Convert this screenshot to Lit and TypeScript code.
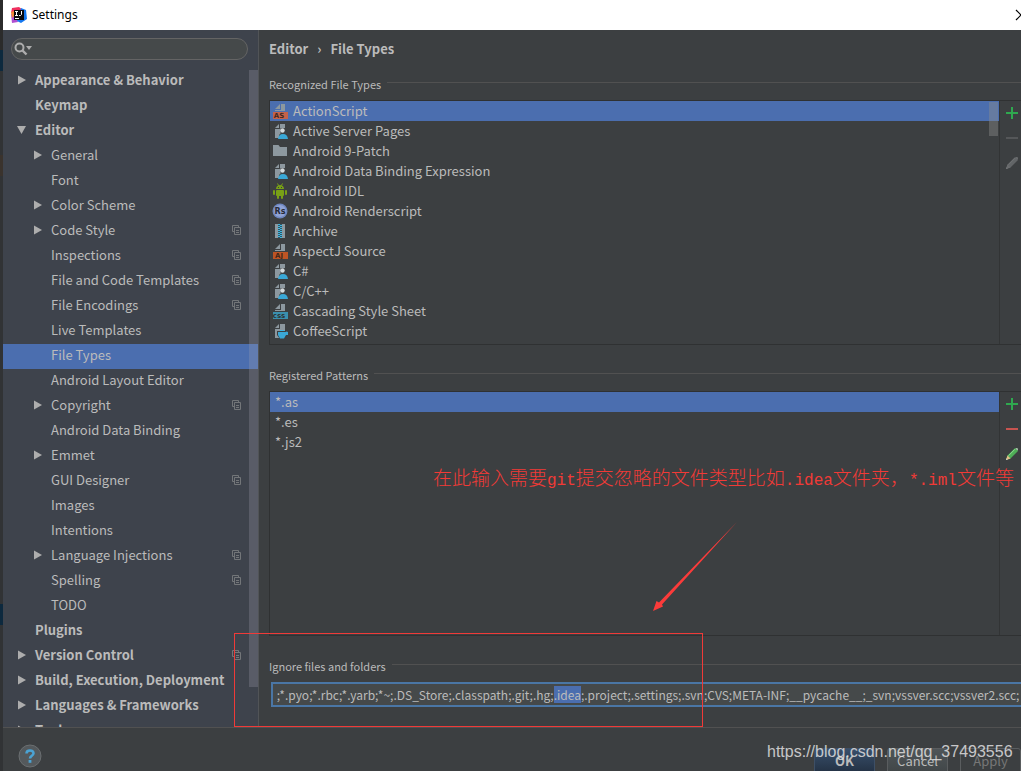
import { LitElement, html, css, svg, nothing } from "lit";
import { customElement, query } from "lit/decorators.js";
import { classMap } from "lit/directives/class-map.js";

type Node = { label: string; level: 0 | 1; arrow?: "open" | "closed"; project?: boolean; selected?: boolean };

const TREE: Node[] = [
  { label: "Appearance & Behavior", level: 0, arrow: "closed" },
  { label: "Keymap", level: 0 },
  { label: "Editor", level: 0, arrow: "open" },
  { label: "General", level: 1, arrow: "closed" },
  { label: "Font", level: 1 },
  { label: "Color Scheme", level: 1, arrow: "closed" },
  { label: "Code Style", level: 1, arrow: "closed", project: true },
  { label: "Inspections", level: 1, project: true },
  { label: "File and Code Templates", level: 1, project: true },
  { label: "File Encodings", level: 1, project: true },
  { label: "Live Templates", level: 1 },
  { label: "File Types", level: 1, selected: true },
  { label: "Android Layout Editor", level: 1 },
  { label: "Copyright", level: 1, arrow: "closed", project: true },
  { label: "Android Data Binding", level: 1 },
  { label: "Emmet", level: 1, arrow: "closed" },
  { label: "GUI Designer", level: 1, project: true },
  { label: "Images", level: 1 },
  { label: "Intentions", level: 1 },
  { label: "Language Injections", level: 1, arrow: "closed", project: true },
  { label: "Spelling", level: 1, project: true },
  { label: "TODO", level: 1 },
  { label: "Plugins", level: 0 },
  { label: "Version Control", level: 0, arrow: "closed", project: true },
  { label: "Build, Execution, Deployment", level: 0, arrow: "closed" },
  { label: "Languages & Frameworks", level: 0, arrow: "closed" },
  { label: "Tools", level: 0, arrow: "closed" },
];

const TYPES: [string, string][] = [
  ["as", "ActionScript"],
  ["user", "Active Server Pages"],
  ["folder", "Android 9-Patch"],
  ["user", "Android Data Binding Expression"],
  ["android", "Android IDL"],
  ["rs", "Android Renderscript"],
  ["zip", "Archive"],
  ["aj", "AspectJ Source"],
  ["user", "C#"],
  ["user", "C/C++"],
  ["css", "Cascading Style Sheet"],
  ["coffee", "CoffeeScript"],
];

const PATTERNS = ["*.as", "*.es", "*.js2"];

const IGNORED =
  "*.pyc;*.pyo;*.rbc;*.yarb;*~;.DS_Store;.classpath;.git;.hg;.idea;.project;.settings;.svn;CVS;META-INF;__pycache__;_svn;vssver.scc;vssver2.scc;";

const tagged = (text: string, fill: string) => svg`
  <path d="M3 6L8 1V6ZM9 1H13V8H3V7H9Z" fill="#8d989f"/>
  <rect x="1" y="9" width="15" height="7" fill=${fill}/>
  <text x="7" y="15" text-anchor="middle" font-family="DejaVu Sans" font-weight="bold" font-size="7" fill="#2b1d18" fill-opacity=".85">${text}</text>`;

const page = svg`<path d="M3 5L7 1V5ZM8 1H13V15H3V6H8Z" fill="#8d989f"/>`;

const fileIcon = (kind: string) => {
  switch (kind) {
    case "as":
      return tagged("AS", "#c4624a");
    case "aj":
      return tagged("AJ", "#bd5424");
    case "css":
      return tagged("css", "#3a8fae");
    case "folder":
      return svg`<path d="M1 2H6.500L8 4H15V13H1Z" fill="#8d989f"/>`;
    case "android":
      return svg`<g fill="#78a016"><path d="M4 6C4 3.500 6 2 8 2S12 3.500 12 6Z"/><path d="M5.500 .5L6.700 2.700M10.500 .5L9.300 2.700" stroke="#78a016"/>
        <rect x="4" y="7" width="8" height="6" rx="1"/><rect x="1" y="7" width="2" height="5" rx="1"/><rect x="13" y="7" width="2" height="5" rx="1"/>
        <rect x="5" y="12" width="2" height="4" rx="1"/><rect x="9" y="12" width="2" height="4" rx="1"/></g>
        <path d="M6 4H7V5H6ZM9 4H10V5H9Z" fill="#3c3f41"/>`;
    case "rs":
      return svg`<circle cx="8" cy="8" r="7.500" fill="#6f87c0"/><circle cx="8" cy="8" r="6" fill="#8fa2d4"/>
        <text x="8" y="11" text-anchor="middle" font-family="DejaVu Sans" font-weight="bold" font-size="8" fill="#262b38">Rs</text>`;
    case "zip":
      return svg`<path d="M3 1H6V15H3ZM10 1H13V15H10Z" fill="#8d989f"/><rect x="6" y="1" width="4" height="14" fill="#2f5565"/>
        <path d="M7 1V15" stroke="#40b6e0" stroke-width="2" stroke-dasharray="1 1"/><path d="M9 2V15" stroke="#40b6e0" stroke-width="2" stroke-dasharray="1 1"/>`;
    case "coffee":
      return svg`${page}<path d="M5 8H16V12L13 14V16H8L5 12Z" fill="#3c3f41"/><path d="M6 9H14V8.500L16 9V12H14L12 15.500H8L6 12Z" fill="#3aa8d6"/><path d="M8 7.500H12.500" stroke="#40b6e0"/>`;
    default:
      return svg`${page}<path d="M7 16V12L8.500 10.500V5H13V10L16 12V16Z" fill="#3c3f41"/><circle cx="10.500" cy="7.500" r="2.200" fill="#d5dadd"/>
        <path d="M6 16C6.500 12.500 8 11 11 11S15.500 12.500 16 16Z" fill="#3aa8d6"/>`;
  }
};

@customElement("app-root")
export class AppRoot extends LitElement {
  @query("#ignored") private ignored!: HTMLInputElement;

  static styles = css`
    :host {
      display: block;
      font: 13px/20px "Noto Sans CJK SC", "Noto Sans", sans-serif;
      color: #bbbbbb;
    }
    * { box-sizing: border-box; }
    ul { list-style: none; margin: 0; padding: 0; }
    svg { display: block; flex: none; }
    button { font: inherit; color: inherit; border: 0; padding: 0; background: none; }
    .screen {
      position: relative;
      display: flex;
      height: 100vh;
      overflow: hidden;
      background: #3c3f41;
    }
    .behind {
      flex: none;
      width: 3px;
      background: linear-gradient(#2b2b2b 0 50px, #0d293e 50px 71px, #313335 71px 155px, #3a332d 155px 176px, #313335 176px 604px, #0d293e 604px 625px, #313335 625px);
    }
    .dialog { flex: 1; min-width: 0; display: flex; flex-direction: column; }
    .title {
      flex: none;
      height: 30px;
      padding-left: 8px;
      display: flex;
      align-items: center;
      gap: 5px;
      background: #ffffff;
      color: #000000;
      font-family: "Noto Sans", sans-serif;
      font-size: 12px;
    }
    .title span { flex: 1; }
    .close { width: 8px; overflow: hidden; }
    .body { flex: 1; min-height: 0; display: flex; }
    .side {
      position: relative;
      flex: none;
      width: 256px;
      padding-top: 8px;
      background: #3e434c;
      border-right: 1px solid #515457;
      overflow: hidden;
    }
    .search {
      display: flex;
      align-items: center;
      height: 22px;
      margin: 0 10px 9px 8px;
      padding-left: 2px;
      border: 1px solid #646464;
      border-radius: 11px;
      background: #45494a;
    }
    .search input {
      flex: 1;
      min-width: 0;
      border: 0;
      outline: 0;
      background: none;
      font: inherit;
      color: inherit;
    }
    .node { display: flex; align-items: center; height: 25px; padding: 0 16px 3px 14px; }
    .node.child { padding-left: 30px; }
    .node.top { font-weight: bold; }
    .node.selected { background: #4b6eaf; }
    .node .arrow { width: 18px; }
    .node .name { flex: 1; white-space: nowrap; }
    .thumb {
      position: absolute;
      top: 40px;
      right: 0;
      width: 9px;
      height: 617px;
      background: rgba(166, 166, 180, 0.26);
    }
    .main { flex: 1; min-width: 0; display: flex; flex-direction: column; padding: 9px 0 20px 10px; }
    .crumbs { display: flex; gap: 9px; margin: 0 0 15px; font-weight: bold; }
    .legend {
      display: flex;
      align-items: center;
      gap: 6px;
      height: 20px;
      font-size: 11px;
      white-space: nowrap;
    }
    .legend::after { content: ""; flex: 1; height: 1px; margin-bottom: 3px; background: #515151; }
    .panel {
      display: flex;
      flex: 1;
      min-height: 0;
      margin: 6px 0 20px;
      border: solid #2f3132;
      border-width: 1px 0 1px 1px;
    }
    .list { position: relative; flex: 1; min-width: 0; border-right: 1px solid #323435; }
    .item { display: flex; align-items: center; gap: 5px; height: 20px; padding-left: 2px; white-space: nowrap; }
    .item.plain { padding-left: 5px; }
    .item.selected { background: #4b6eaf; }
    .list .bar {
      position: absolute;
      top: 1px;
      right: 1px;
      width: 9px;
      height: 34px;
      background: rgba(140, 140, 140, 0.42);
    }
    .tools { flex: none; width: 21px; display: flex; flex-direction: column; align-items: center; padding-left: 2px; }
    .tools button { height: 25px; width: 14px; padding-bottom: 2px; }
    .field {
      height: 25px;
      margin: 6px -4px 0 2px;
      padding: 0 4px 1px;
      border: 2px solid #4a76a5;
      background: #45494a;
      color: #bbbbbb;
      font: inherit;
      font-size: 12px;
      outline: 0;
    }
    .field::selection { background: #4b6eaf; color: #bbbbbb; }
    .footer {
      flex: none;
      height: 44px;
      display: flex;
      align-items: flex-start;
      gap: 12px;
      padding: 16px 0 0 15px;
      border-top: 1px solid #515151;
      overflow: hidden;
    }
    .help { margin-right: auto; }
    .btn {
      width: 61px;
      height: 26px;
      margin-top: 4px;
      border: 1px solid #5a5d5f;
      border-radius: 3px;
      background: linear-gradient(#4f5558, #414648);
    }
    .btn.ok { background: linear-gradient(#384f6b, #233143); border-color: #3d4f66; font-weight: bold; }
    .btn.off { background: none; color: #777777; }
    .frame {
      position: absolute;
      left: 234px;
      top: 633px;
      width: 469px;
      height: 94px;
      border: 1px solid #f03a38;
    }
    .note {
      position: absolute;
      left: 433px;
      top: 464px;
      font: 300 19px/26px "Noto Sans CJK SC", sans-serif;
      color: #f23a36;
      white-space: nowrap;
    }
    .note span { font: 16px/26px "Liberation Mono", monospace; }
    .pointer { position: absolute; left: 648px; top: 520px; }
    .mark {
      position: absolute;
      left: 767px;
      top: 742px;
      font: 16px/20px "Liberation Sans", sans-serif;
      color: rgba(225, 225, 225, 0.85);
      white-space: nowrap;
    }
  `;

  firstUpdated() {
    const start = IGNORED.indexOf(".idea");
    this.ignored.focus({ preventScroll: true });
    this.ignored.setSelectionRange(start, start + 5);
    this.ignored.scrollLeft = this.ignored.scrollWidth;
  }

  private node(n: Node) {
    const cls = { node: true, top: n.level === 0, child: n.level === 1, selected: !!n.selected };
    return html`<li class=${classMap(cls)} role="treeitem" aria-selected=${n.selected ? "true" : "false"}>
      <span class="arrow">${n.arrow
        ? html`<svg width="10" height="10" viewBox="0 0 10 10"><path fill="#adadad" d=${n.arrow === "open" ? "M0 1H9L4.500 9Z" : "M1 .5V9.500L9 5Z"} /></svg>`
        : nothing}</span>
      <span class="name">${n.label}</span>
      ${n.project
        ? html`<svg width="10" height="10" viewBox="0 0 10 10" fill="none" stroke="#737679"><path d="M2 6.500H.5V.5H6.500V2M2.500 2.500H8.500V9.500H2.500ZM4 5.500H7M4 7.500H7" /></svg>`
        : nothing}
    </li>`;
  }

  private tools(enabled: boolean) {
    return html`<div class="tools">
      <button aria-label="Add"><svg width="14" height="14" viewBox="0 0 14 14"><path d="M7 1V13M1 7H13" stroke="#2fa84f" stroke-width="2"/></svg></button>
      <button aria-label="Remove" ?disabled=${!enabled}><svg width="14" height="14" viewBox="0 0 14 14"><path d="M1 7H13" stroke=${enabled ? "#c75450" : "#555759"} stroke-width="2"/></svg></button>
      <button aria-label="Edit" ?disabled=${!enabled}><svg width="14" height="14" viewBox="0 0 14 14">
        <path d="M1 13L2.500 8.500L9.500 1.500L12 1L13 2L12.500 4.500L5.500 11.500Z" fill=${enabled ? "#4fae57" : "#626567"} />
        <path d="M3.500 8.700L10 2.200" stroke=${enabled ? "#8fdc92" : "#707375"} />
        <path d="M1 13L2.500 8.500L5.500 11.500Z" fill=${enabled ? "#e2bd86" : "#6a6c6e"} />
        <path d="M1 13L1.600 11.200L2.800 12.400Z" fill=${enabled ? "#d8d8d8" : "#77797b"} />
        <path d="M10.500 1.500L12 1L13 2L12.500 3.500Z" fill=${enabled ? "#b9b9b9" : "#6a6c6e"} />
      </svg></button>
    </div>`;
  }

  render() {
    return html`<div class="screen">
      <div class="behind"></div>
      <div class="dialog">
        <header class="title">
          <svg width="16" height="16" viewBox="0 0 16 16">
            <path d="M1 1L8 0L12 3L6 9L0 6Z" fill="#f0305f"/><path d="M0 7L5 8L7 15L1 16Z" fill="#b04fd0"/><path d="M0 5L3 4V9L1 11Z" fill="#f58a3a"/>
            <path d="M10 1L15 3L16 12L10 16L6 14Z" fill="#1578f0"/><rect x="3" y="3" width="10" height="10" fill="#0b0b0d"/>
            <path d="M4 4.500H7M5.500 4.500V8M4 8.500H7M10.500 4V7.500L9.500 8.500H8M4 11.500H8" fill="none" stroke="#fff"/>
          </svg>
          <span>Settings</span>
          <button class="close" aria-label="Close"><svg width="12" height="12" viewBox="0 0 12 12"><path d="M3 1L13 11M13 1L3 11" stroke="#000" stroke-width="1.200"/></svg></button>
        </header>
        <div class="body">
          <nav class="side">
            <label class="search">
              <svg width="20" height="14" viewBox="0 0 20 14"><circle cx="5.500" cy="5.500" r="4" fill="none" stroke="#adadad" stroke-width="2"/><path d="M8.500 8.500L12.500 12.500" stroke="#adadad" stroke-width="2.400"/><path d="M12 4H18L15 8Z" fill="#adadad"/></svg>
              <input type="text" aria-label="Search settings" />
            </label>
            <ul role="tree">${TREE.map((n) => this.node(n))}</ul>
            <div class="thumb"></div>
          </nav>
          <main class="main">
            <div class="crumbs"><span>Editor</span><span>›</span><span>File Types</span></div>
            <div class="legend">Recognized File Types</div>
            <section class="panel">
              <div class="list">
                <ul role="listbox" aria-label="Recognized File Types">
                  ${TYPES.map(([kind, label], i) => html`<li role="option" class=${classMap({ item: true, selected: i === 0 })}>
                    <svg width="16" height="16" viewBox="0 0 16 16">${fileIcon(kind)}</svg><span>${label}</span>
                  </li>`)}
                </ul>
                <div class="bar"></div>
              </div>
              ${this.tools(false)}
            </section>
            <div class="legend">Registered Patterns</div>
            <section class="panel">
              <div class="list">
                <ul role="listbox" aria-label="Registered Patterns">
                  ${PATTERNS.map((p, i) => html`<li role="option" class=${classMap({ item: true, plain: true, selected: i === 0 })}>${p}</li>`)}
                </ul>
              </div>
              ${this.tools(true)}
            </section>
            <label class="legend" for="ignored">Ignore files and folders</label>
            <input id="ignored" class="field" type="text" spellcheck="false" .value=${IGNORED} />
          </main>
        </div>
        <footer class="footer">
          <button class="help" aria-label="Help"><svg width="24" height="24" viewBox="0 0 24 24"><circle cx="12" cy="12" r="11" fill="#54595c" stroke="#6a6e70"/><path d="M8.500 9.500C8.500 5.500 15.500 5.500 15.500 9.300C15.500 11.800 12 11.800 12 14.500" fill="none" stroke="#4ba3d3" stroke-width="2.600"/><rect x="10.600" y="16" width="2.800" height="2.800" fill="#4ba3d3"/></svg></button>
          <button class="btn ok">OK</button>
          <button class="btn">Cancel</button>
          <button class="btn off" disabled>Apply</button>
        </footer>
      </div>
      <div class="frame"></div>
      <div class="note">在此输入需要<span>git</span>提交忽略的文件类型比如<span>.idea</span>文件夹，<span>*.iml</span>文件等</div>
      <svg class="pointer" width="92" height="96" viewBox="0 0 92 96"><path d="M89 2L14 84.500L15 86.500L5 91L8.500 81L11 82.500Z" fill="#fb3b3a"/></svg>
      <div class="mark">https://blog.csdn.net/qq_37493556</div>
    </div>`;
  }
}
